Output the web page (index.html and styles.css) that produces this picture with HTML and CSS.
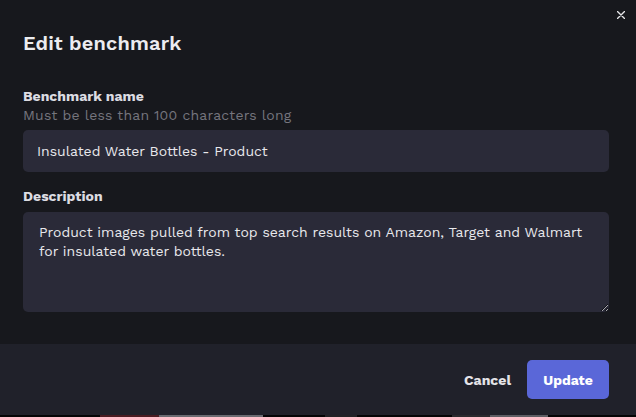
FILE: index.html
```html
<!DOCTYPE html>
<html lang="en">
<head>
<meta charset="utf-8">
<title>Edit benchmark</title>
<link rel="stylesheet" href="styles.css">
</head>
<body>
<div class="page">
  <section class="modal">
    <button class="close" aria-label="Close">
      <svg width="8" height="8" viewBox="0 0 8 8"><path d="M0.5 0.5 L7.5 7.5 M7.5 0.5 L0.5 7.5" stroke="#e6e6ea" stroke-width="1.4" stroke-linecap="round"/></svg>
    </button>
    <header class="modal-header">Edit benchmark</header>
    <div class="modal-body">
      <div class="field">
        <label class="label" for="name">Benchmark name</label>
        <div class="helper">Must be less than 100 characters long</div>
        <input class="input" id="name" type="text" value="Insulated Water Bottles - Product">
      </div>
      <div class="field">
        <label class="label" for="desc">Description</label>
        <textarea class="textarea" id="desc">Product images pulled from top search results on Amazon, Target and Walmart for insulated water bottles.</textarea>
      </div>
    </div>
    <footer class="modal-footer">
      <button class="btn btn-ghost">Cancel</button>
      <button class="btn btn-primary">Update</button>
    </footer>
  </section>
  <div class="behind">
    <span class="b b1"></span><span class="b b2"></span><span class="b b3"></span><span class="b b4"></span><span class="b b5"></span><span class="b b6"></span><span class="b b7"></span>
  </div>
</div>
</body>
</html>
```
FILE: styles.css
```css
* { box-sizing: border-box; }
html, body { margin: 0; padding: 0; background: #000; }
body { font-family: "Work Sans", Inter, "Open Sans", sans-serif; color: #e8e8ec; }
.page { width: 636px; height: 417px; display: flex; flex-direction: column; overflow: hidden; }
.modal { position: relative; height: 415px; background: #17181d; display: flex; flex-direction: column; }
.close { position: absolute; top: 10px; right: 10px; width: 10px; height: 10px; padding: 0; border: 0; background: transparent; display: flex; align-items: center; justify-content: center; }
.modal-header { padding: 29px 23px 0; font-size: 20px; font-weight: 600; line-height: 28px; letter-spacing: 0.15px; color: #ececf0; }
.modal-body { padding: 31px 27px 0 23px; display: flex; flex-direction: column; gap: 16px; flex: 1; }
.field { display: flex; flex-direction: column; }
.label { font-size: 14px; font-weight: 700; line-height: 17px; color: #dcdce2; }
.helper { font-size: 14px; line-height: 20px; letter-spacing: 0.2px; color: #75757e; margin-bottom: 5px; }
.input { height: 42px; border: 0; border-radius: 5px; background: #2a2a38; color: #e8e8ec; font: inherit; font-size: 14px; padding: 0 14px; outline: none; }
.textarea { margin-top: 7px; height: 100px; border: 0; border-radius: 5px; background: #2a2a38; color: #e8e8ec; font: inherit; font-size: 14px; line-height: 19px; padding: 11px 16px; resize: vertical; outline: none; }
.modal-footer { height: 71px; background: #20212a; display: flex; justify-content: flex-end; align-items: center; gap: 16px; padding: 0 27px 0 0; }
.btn { font: inherit; font-size: 14px; font-weight: 700; border: 0; cursor: pointer; }
.btn-ghost { background: transparent; color: #e4e4e8; padding: 0; }
.btn-primary { background: #5a67d8; color: #fff; width: 82px; height: 39px; border-radius: 5px; }
.behind { height: 2px; display: flex; background: #050506; }
.b { display: block; height: 2px; }
.b1 { width: 100px; }
.b2 { width: 59px; background: #4a1c22; }
.b3 { width: 104px; background: #6a6a70; }
.b4 { width: 62px; }
.b5 { width: 32px; background: #222226; }
.b6 { width: 38px; margin-left: 95px; background: #2a2a2e; }
.b7 { width: 58px; background: #5e5e64; }
```
